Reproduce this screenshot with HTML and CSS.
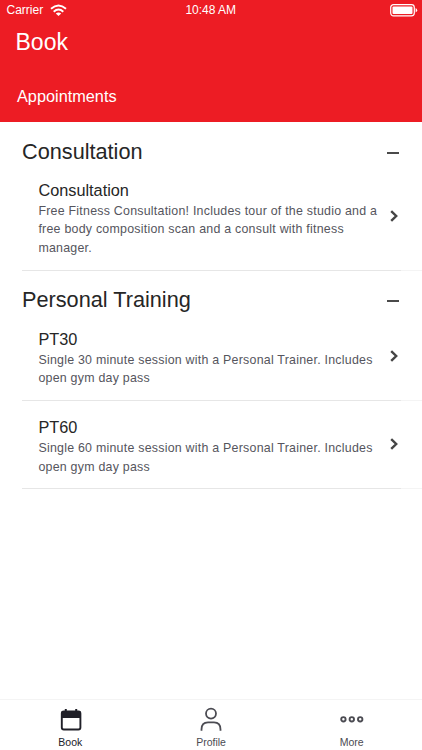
FILE: index.html
```html
<!DOCTYPE html>
<html lang="en">
<head>
<meta charset="utf-8">
<title>Book</title>
<link rel="stylesheet" href="styles.css">
</head>
<body>
<header class="header">
  <div class="status">
    <div class="carrier">Carrier
      <svg class="wifi" width="17" height="13" viewBox="0 0 17 13" fill="none" stroke="#fff" stroke-width="1.9">
        <path d="M1 4.7Q8.5-1.8 16 4.7M3.7 7.7Q8.5 3.4 13.3 7.7"/>
        <path d="M8.5 12 5.8 9.4Q8.5 7.5 11.2 9.4Z" fill="#fff" stroke="none"/>
      </svg>
    </div>
    <div class="time">10:48 AM</div>
    <svg class="battery" width="28" height="13" viewBox="0 0 28 13">
      <rect x=".7" y=".7" width="23.6" height="11.2" rx="2.8" fill="none" stroke="#fff" stroke-width="1.2"/>
      <rect x="2.5" y="2.5" width="20" height="7.6" rx="1" fill="#fff"/>
      <path d="M25.6 4.1Q27.2 4.8 27.2 6.3T25.6 8.5Z" fill="#fff"/>
    </svg>
  </div>
  <h1 class="title">Book</h1>
  <div class="subtitle">Appointments</div>
</header>
<main class="content">
  <section class="group">
    <div class="group-head"><h2>Consultation</h2><span class="minus"></span></div>
    <div class="item">
      <div class="item-text">
        <h3>Consultation</h3>
        <p>Free Fitness Consultation! Includes tour of the studio and a<br>free body composition scan and a consult with fitness<br>manager.</p>
      </div>
      <svg class="chevron" width="8" height="12" viewBox="0 0 8 12"><path d="M1.2 1.2 6.2 6 1.2 10.8"/></svg>
    </div>
  </section>
  <section class="group">
    <div class="group-head"><h2>Personal Training</h2><span class="minus"></span></div>
    <div class="item">
      <div class="item-text">
        <h3>PT30</h3>
        <p>Single 30 minute session with a Personal Trainer. Includes<br>open gym day pass</p>
      </div>
      <svg class="chevron" width="8" height="12" viewBox="0 0 8 12"><path d="M1.2 1.2 6.2 6 1.2 10.8"/></svg>
    </div>
    <div class="item next">
      <div class="item-text">
        <h3>PT60</h3>
        <p>Single 60 minute session with a Personal Trainer. Includes<br>open gym day pass</p>
      </div>
      <svg class="chevron" width="8" height="12" viewBox="0 0 8 12"><path d="M1.2 1.2 6.2 6 1.2 10.8"/></svg>
    </div>
  </section>
</main>
<nav class="tabs">
  <div class="tab active">
    <svg width="24" height="26" viewBox="0 0 24 26">
      <rect x="3.8" y="4.5" width="18.6" height="18" rx="2" fill="none" stroke="#202028" stroke-width="1.9"/>
      <path d="M3.5 4.5h19.2v6.5H3.5ZM6.8 2h2V5h-2ZM17.2 2h2V5h-2Z" fill="#202028"/>
    </svg>
    <span>Book</span>
  </div>
  <div class="tab">
    <svg width="24" height="26" viewBox="0 0 24 26" fill="none" stroke="#4b4b52" stroke-width="1.8">
      <circle cx="12" cy="6.6" r="5"/>
      <path d="M2.5 23.8v-1.4Q2.5 15.4 9 15.4h6q6.5 0 6.5 7v1.4"/>
    </svg>
    <span>Profile</span>
  </div>
  <div class="tab">
    <svg width="24" height="26" viewBox="0 0 24 26" fill="none" stroke="#4b4b52" stroke-width="1.9">
      <circle cx="3.4" cy="12.3" r="2.2"/><circle cx="11.8" cy="12.3" r="2.2"/><circle cx="20.2" cy="12.3" r="2.2"/>
    </svg>
    <span>More</span>
  </div>
</nav>
</body>
</html>
```
FILE: styles.css
```css
* { box-sizing: border-box; margin: 0; padding: 0; }
body {
  width: 422px;
  height: 750px;
  display: flex;
  flex-direction: column;
  overflow: hidden;
  background: #fff;
  color: #262626;
  font-family: "Liberation Sans", Arial, sans-serif;
}
svg { display: block; }
h1, h2, h3 { font-weight: 400; }
.header { height: 122px; flex: none; background: #ed1c24; color: #fff; }
.status {
  display: grid;
  grid-template-columns: 1fr auto 1fr;
  height: 20px;
  padding: 0 4px 0 6.5px;
  align-items: center;
  font-size: 12px;
}
.carrier { display: flex; align-items: center; gap: 6.5px; }
.time { margin-left: -3px; }
.battery { justify-self: end; }
.title { padding-left: 15.5px; margin-top: 8px; font-size: 23px; line-height: 28px; }
.subtitle { padding-left: 17px; margin-top: 29px; font-size: 16.3px; line-height: 22px; }
.content { flex: 1; }
.group-head {
  display: flex;
  justify-content: space-between;
  align-items: center;
  height: 59px;
  padding: 0 23px 0 22px;
}
.group-head h2 { font-size: 21.7px; line-height: 28px; }
.minus { width: 12px; height: 2px; margin-top: 2px; background: #4a4a4a; }
.item {
  display: flex;
  justify-content: space-between;
  align-items: center;
  margin-left: 22px;
  padding: 0 24px 13px 16.4px;
  border-bottom: 1px solid;
  border-image: linear-gradient(90deg, #e6e6e6 378px, #f4f4f4 378px) 1;
}
.next { padding-top: 17px; padding-bottom: 12px; }
.item-text h3 { font-size: 16.3px; line-height: 19px; }
.item-text p {
  margin-top: 2px;
  font-size: 12.4px;
  line-height: 18.3px;
  letter-spacing: .24px;
  color: #55555d;
  white-space: nowrap;
}
.chevron { flex: none; margin-bottom: 5px; fill: none; stroke: #454545; stroke-width: 2.4; }
.next .chevron { margin-bottom: 6px; }
.tabs { display: flex; height: 51px; border-top: 1px solid #f4f4f4; }
.tab {
  flex: 1;
  display: flex;
  flex-direction: column;
  align-items: center;
  padding-top: 7px;
  font-size: 10.5px;
  line-height: 14px;
  color: #4b4b52;
}
.tab span { margin-top: 2px; }
.active { color: #202028; }
```
